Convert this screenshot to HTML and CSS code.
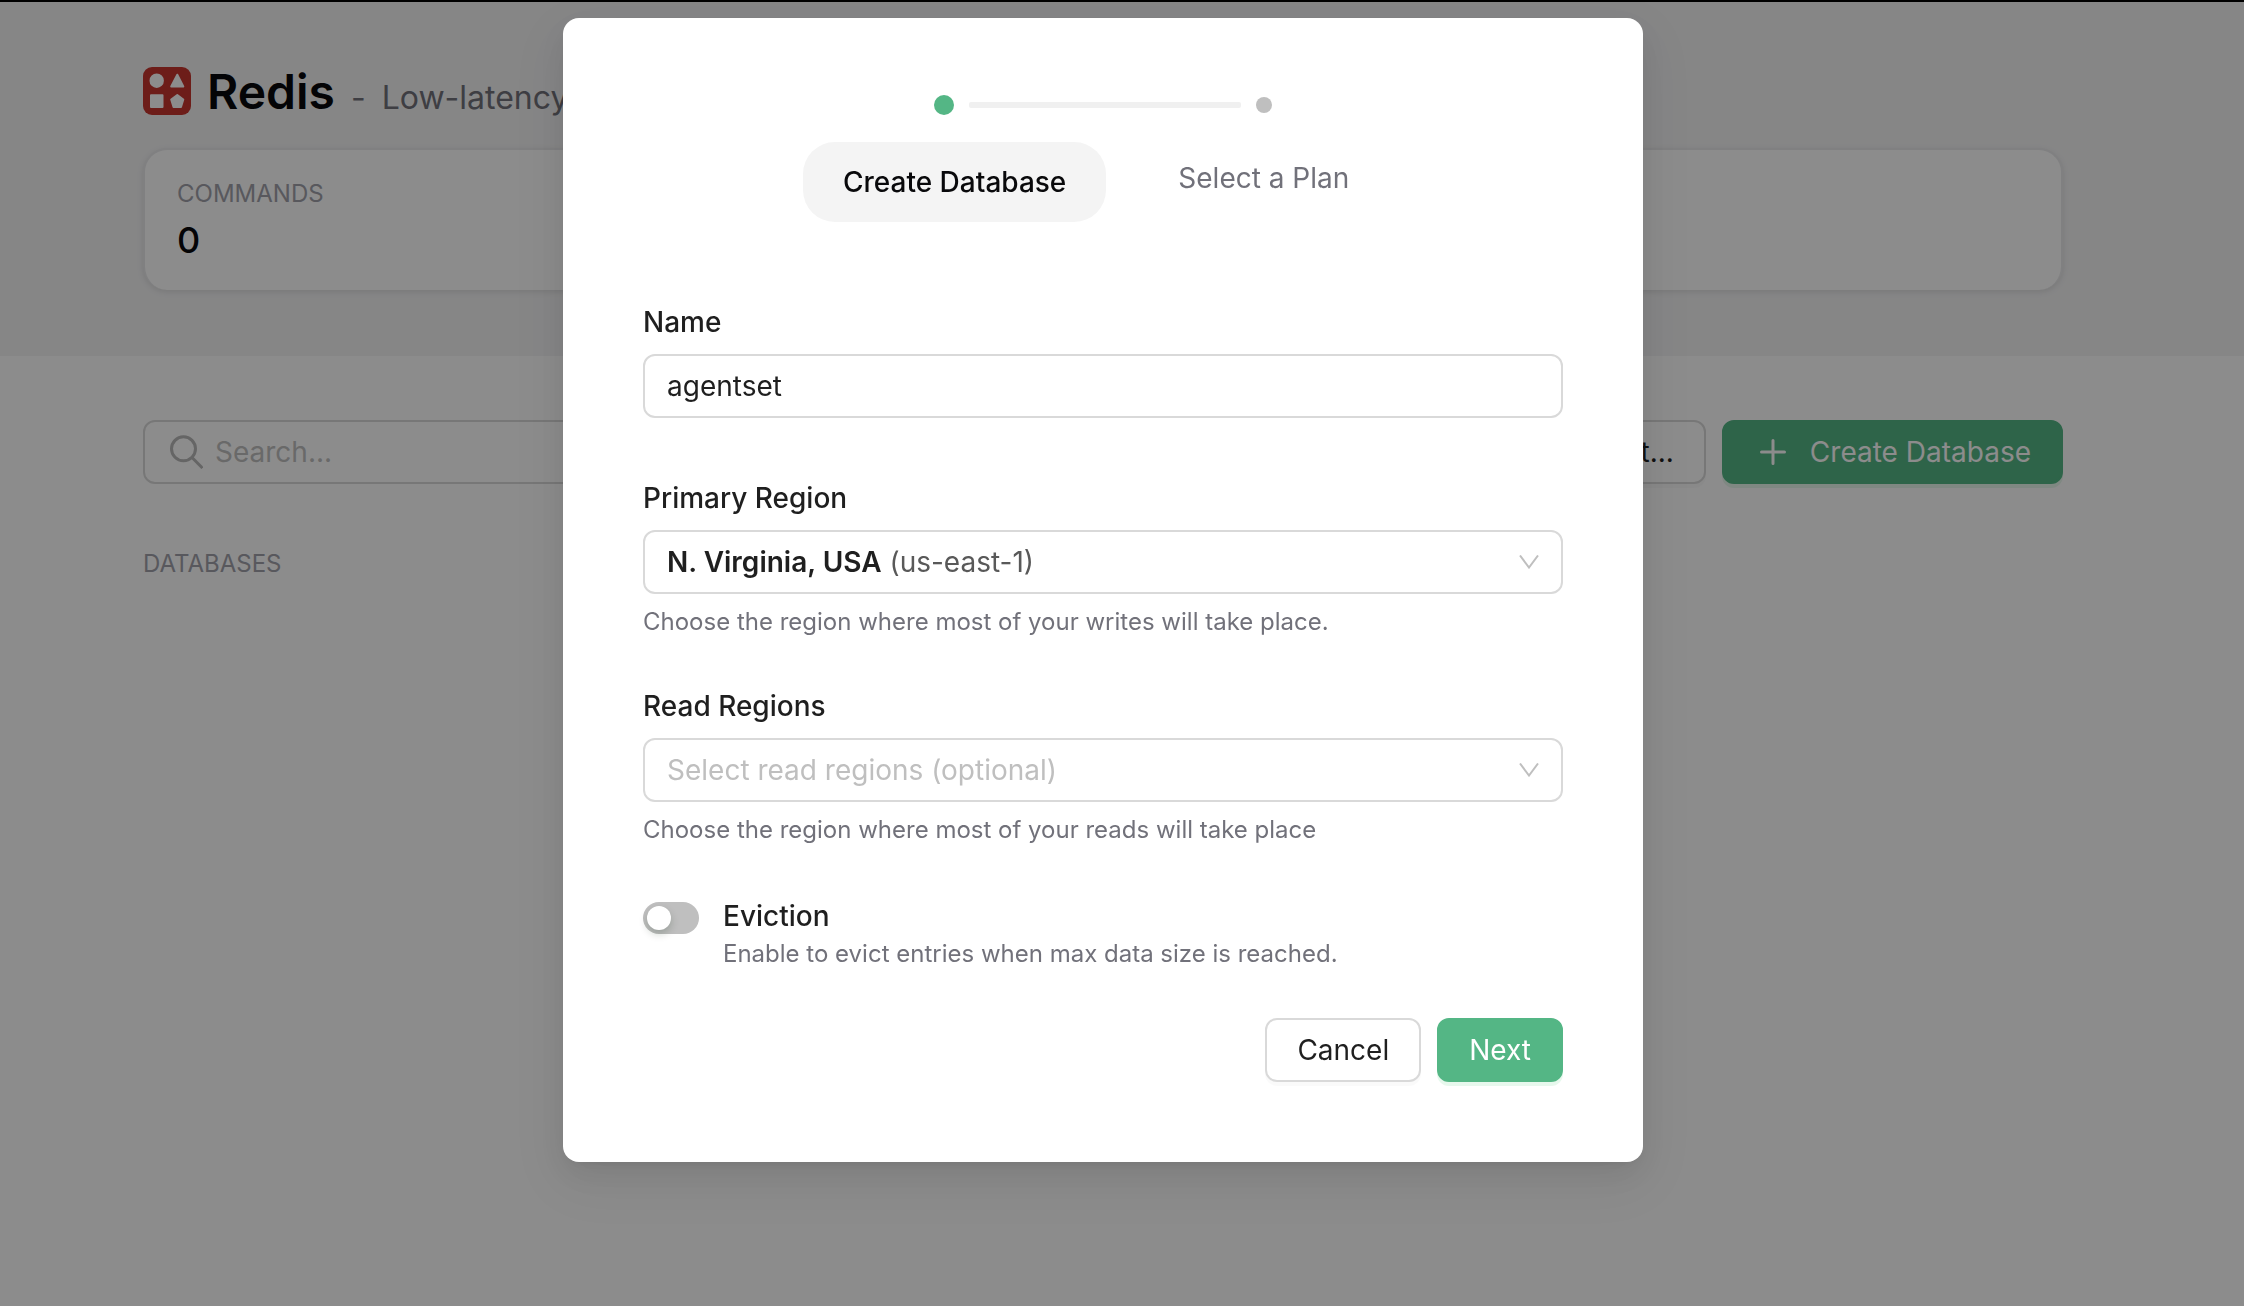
FILE: index.html
```html
<!DOCTYPE html>
<html lang="en">
<head>
<meta charset="utf-8">
<title>Redis</title>
<link rel="stylesheet" href="styles.css">
</head>
<body>
<div class="page">
  <header class="hero">
    <div class="container">
      <div class="title-row">
        <svg class="logo" viewBox="0 0 48 48" aria-hidden="true">
          <rect width="48" height="48" rx="9" fill="#c6362f"/>
          <g fill="#fff" stroke="#fff" stroke-linejoin="round" stroke-width="2">
            <circle cx="13.700" cy="13.700" r="6.200"/>
            <path d="M34.300 7.700 40.300 19.500H28.200z"/>
            <rect x="8" y="28.200" width="11.500" height="11.800"/>
            <path d="M34.300 28 40.300 32.500 38 40H30.500L28.200 32.500z"/>
          </g>
        </svg>
        <h1 class="title">Redis</h1>
        <span class="subtitle">-</span>
        <span class="subtitle">Low-latency</span>
      </div>
      <section class="stats">
        <div class="caption">COMMANDS</div>
        <div class="stat-value">0</div>
      </section>
    </div>
  </header>
  <main class="container content">
    <div class="toolbar">
      <label class="search">
        <svg class="search-icon" viewBox="0 0 34 34" fill="none" stroke="currentColor" stroke-width="3" aria-hidden="true"><circle cx="14.500" cy="13.800" r="12"/><path d="M23 22.500 33.500 33"/></svg>
        <input class="search-input" type="search" placeholder="Search..." aria-label="Search">
      </label>
      <button class="button" type="button">Import...</button>
      <button class="button primary" type="button">
        <svg class="plus-icon" viewBox="0 0 26 26" fill="none" stroke="currentColor" stroke-width="3" stroke-linecap="round" aria-hidden="true"><path d="M13 1.500V24.500M1.500 13H24.500"/></svg>
        Create Database
      </button>
    </div>
    <div class="caption">DATABASES</div>
  </main>
</div>

<div class="overlay">
  <form class="dialog" role="dialog" aria-label="Create Database">
    <div class="stepper">
      <div class="track"><span class="dot active"></span><span class="line"></span><span class="dot"></span></div>
      <ol class="steps">
        <li class="step current" aria-current="step">Create Database</li>
        <li class="step">Select a Plan</li>
      </ol>
    </div>

    <div class="field field-name">
      <label class="label" for="name">Name</label>
      <input class="control" id="name" type="text" value="agentset">
    </div>

    <div class="field">
      <label class="label" for="primary">Primary Region</label>
      <button class="control select" id="primary" type="button" aria-haspopup="listbox">
        <span class="select-value"><strong>N. Virginia, USA</strong> <span class="region-code">(us-east-1)</span></span>
        <svg class="chevron" viewBox="0 0 20 14" fill="none" stroke="currentColor" stroke-width="2" aria-hidden="true"><path d="M1 .5 10 12.500 19 .5"/></svg>
      </button>
      <p class="help">Choose the region where most of your writes will take place.</p>
    </div>

    <div class="field">
      <label class="label" for="read">Read Regions</label>
      <button class="control select" id="read" type="button" aria-haspopup="listbox">
        <span class="placeholder">Select read regions (optional)</span>
        <svg class="chevron" viewBox="0 0 20 14" fill="none" stroke="currentColor" stroke-width="2" aria-hidden="true"><path d="M1 .5 10 12.500 19 .5"/></svg>
      </button>
      <p class="help">Choose the region where most of your reads will take place</p>
    </div>

    <div class="switch-row">
      <input class="switch" id="eviction" type="checkbox" role="switch">
      <div>
        <label class="label switch-label" for="eviction">Eviction</label>
        <p class="switch-help">Enable to evict entries when max data size is reached.</p>
      </div>
    </div>

    <div class="actions">
      <button class="button" type="button">Cancel</button>
      <button class="button primary" type="submit">Next</button>
    </div>
  </form>
</div>
</body>
</html>
```
FILE: styles.css
```css
* { box-sizing: border-box; }

body {
  margin: 0;
  color: #1f1f1f;
  background: #fff;
  font: 28px/44px Inter, sans-serif;
}

h1, p, ol { margin: 0; padding: 0; }

button, input { font: inherit; color: inherit; }

.page { border-top: 2px solid #000; }

.hero {
  padding: 60px 38px 66px 0;
  background: #f4f4f5;
}

.container {
  max-width: 1920px;
  margin: 0 auto;
}

.title-row {
  display: flex;
  align-items: baseline;
  gap: 16px;
  height: 58px;
  line-height: 60px;
}

.logo {
  align-self: center;
  flex: none;
  width: 48px;
  height: 48px;
}

.title {
  color: #09090b;
  font-size: 48px;
  font-weight: 600;
}

.subtitle {
  color: #71717a;
  font-size: 32px;
}

.stats {
  margin-top: 28px;
  padding: 24px 32px;
  border: 2px solid #e9e9eb;
  border-bottom: 0;
  border-radius: 24px;
  background: #fff;
  box-shadow: 0 2px 6px rgba(0, 0, 0, .1);
}

.caption {
  color: #a1a1aa;
  font-size: 24px;
  line-height: 40px;
}

.stat-value {
  color: #09090b;
  font-size: 36px;
  font-weight: 500;
  line-height: 52px;
}

.content {
  width: calc(100% - 38px);
  margin: 0;
  margin-left: max(0px, calc((100% - 1958px) / 2));
  padding-top: 64px;
}

.toolbar {
  display: flex;
  gap: 16px;
  margin-bottom: 60px;
}

.search {
  display: flex;
  flex: 1;
  align-items: center;
  gap: 12px;
  height: 64px;
  padding: 0 24px;
  border: 2px solid #d9d9d9;
  border-radius: 12px;
}

.search-icon {
  width: 34px;
  height: 34px;
  color: #b8b8b8;
}

.search-input {
  flex: 1;
  min-width: 0;
  padding: 0;
  border: 0;
  outline: 0;
  background: none;
}

.search-input::placeholder { color: #bfbfbf; opacity: 1; }

.button {
  display: flex;
  align-items: center;
  gap: 24px;
  height: 64px;
  padding: 0 30px;
  border: 2px solid #d9d9d9;
  border-radius: 12px;
  background: #fff;
  box-shadow: 0 4px 0 rgba(0, 0, 0, .02);
}

.button.primary {
  border-color: #54b685;
  background: #54b685;
  color: #fff;
  box-shadow: 0 4px 0 rgba(16, 185, 80, .1);
}

.plus-icon {
  width: 26px;
  height: 26px;
  margin-left: 6px;
}

.overlay {
  position: fixed;
  inset: 0;
  display: flex;
  align-items: flex-start;
  justify-content: center;
  padding: 18px 38px 18px 0;
  overflow: auto;
  background: rgba(0, 0, 0, .45);
}

.dialog {
  width: 1080px;
  max-width: 100%;
  padding: 77px 80px 80px;
  border-radius: 16px;
  background: #fff;
  box-shadow: 0 12px 32px rgba(0, 0, 0, .08), 0 6px 12px -8px rgba(0, 0, 0, .12), 0 18px 56px 16px rgba(0, 0, 0, .05);
}

.stepper {
  max-width: 600px;
  margin: 0 auto 78px;
}

.track {
  display: flex;
  align-items: center;
  gap: 15px;
  width: 338px;
  height: 20px;
  margin: 0 auto 27px;
}

.dot {
  width: 16px;
  height: 16px;
  border-radius: 50%;
  background: #bfbfbf;
}

.dot.active {
  width: 20px;
  height: 20px;
  background: #54b685;
}

.line {
  flex: 1;
  height: 6px;
  border-radius: 2px;
  background: #f0f0f0;
}

.steps {
  display: flex;
  align-items: flex-start;
  gap: 72px;
  list-style: none;
}

.step {
  color: #71717a;
  line-height: 72px;
}

.step.current {
  padding: 0 40px;
  border-radius: 32px;
  background: #f4f4f4;
  color: #09090b;
  font-weight: 500;
  line-height: 80px;
}

.field { margin-bottom: 42px; }

.field-name { margin-bottom: 58px; }

.label {
  display: block;
  margin-bottom: 10px;
  font-weight: 500;
}

.control {
  display: block;
  width: 100%;
  height: 64px;
  padding: 0 22px;
  border: 2px solid #d9d9d9;
  border-radius: 12px;
  background: #fff;
}

.select {
  display: flex;
  align-items: center;
  justify-content: space-between;
  text-align: left;
}

.select-value strong { font-weight: 600; }

.region-code { color: #595959; }

.placeholder { color: #bfbfbf; }

.chevron {
  width: 20px;
  height: 14px;
  color: #bfbfbf;
}

.help {
  margin-top: 8px;
  color: #71717a;
  font-size: 24px;
  line-height: 40px;
}

.switch-row {
  display: flex;
  gap: 24px;
  margin: 44px 0 48px;
}

.switch {
  appearance: none;
  flex: none;
  width: 56px;
  height: 32px;
  margin: 8px 0 0;
  padding: 4px;
  border-radius: 16px;
  background: #bfbfbf;
}

.switch::before {
  content: "";
  display: block;
  width: 24px;
  height: 24px;
  border-radius: 50%;
  background: #fff;
  box-shadow: 0 4px 8px rgba(0, 35, 11, .2);
}

.switch:checked { background: #54b685; }

.switch:checked::before { margin-left: auto; }

.switch-label { margin-bottom: 0; }

.switch-help {
  color: #71717a;
  font-size: 24px;
  line-height: 32px;
}

.actions {
  display: flex;
  justify-content: flex-end;
  gap: 16px;
}
```
